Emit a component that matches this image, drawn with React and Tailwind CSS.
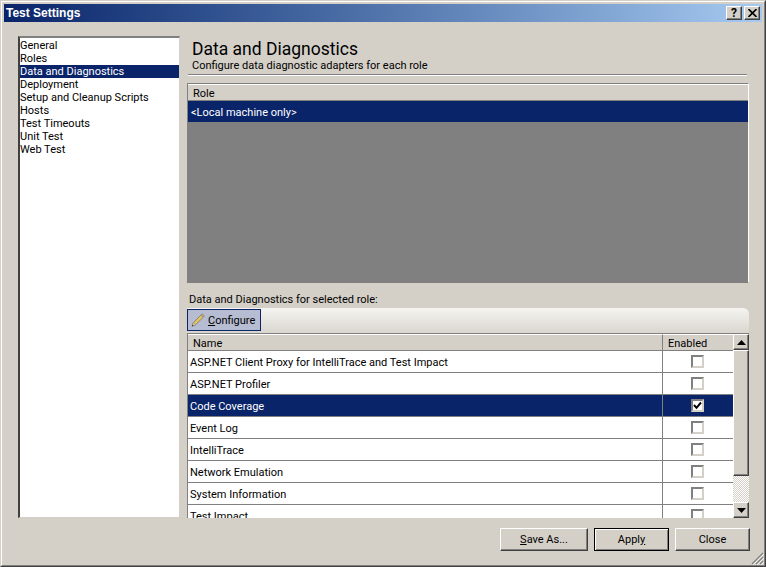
import React from 'react'

const FONT = "font-['Roboto','Liberation_Sans',sans-serif]"

const pages = [
  'General',
  'Roles',
  'Data and Diagnostics',
  'Deployment',
  'Setup and Cleanup Scripts',
  'Hosts',
  'Test Timeouts',
  'Unit Test',
  'Web Test',
]

const adapters = [
  { name: 'ASP.NET Client Proxy for IntelliTrace and Test Impact' },
  { name: 'ASP.NET Profiler' },
  { name: 'Code Coverage', selected: true, checked: true },
  { name: 'Event Log' },
  { name: 'IntelliTrace' },
  { name: 'Network Emulation' },
  { name: 'System Information' },
  { name: 'Test Impact' },
]

// raised 3D edge used for the classic buttons
const raised = 'border border-t-white border-l-white border-r-[#404040] border-b-[#404040] shadow-[inset_-1px_-1px_0_#808080] bg-[#d4d0c8]'

const Pencil = () => (
  <svg width="16" height="16" viewBox="0 0 16 16" className="shrink-0">
    <path d="M2.2 14 L3.4 10.6 L12.2 1.8 L14.4 4 L5.6 12.8 Z" fill="#e3c35c" stroke="#77705c" strokeWidth="0.7" />
    <path d="M2.2 14 L3.4 10.6 L5.6 12.8 Z" fill="#eadfc4" stroke="#77705c" strokeWidth="0.5" />
    <path d="M1.8 14.6 L2.5 12.7 L3.7 13.8 Z" fill="#333" />
    <path d="M11 3 L13.2 5.2" stroke="#9a9a9a" strokeWidth="1.3" />
  </svg>
)

const Check = ({ checked }) => (
  <div className="w-[13px] h-[13px] bg-white border-2 border-t-[#808080] border-l-[#808080] border-r-[#d4d0c8] border-b-[#d4d0c8] flex items-center justify-center">
    {checked && (
      <svg width="9" height="9" viewBox="0 0 9 9">
        <path d="M1 4 L3.5 6.8 L8 1.5" fill="none" stroke="#000" strokeWidth="2" />
      </svg>
    )}
  </div>
)

const Arrow = ({ down }) => (
  <svg width="9" height="5" viewBox="0 0 9 5">
    <path d={down ? 'M0 0 H9 L4.5 5 Z' : 'M0 5 H9 L4.5 0 Z'} fill="#000" />
  </svg>
)

const Btn = ({ first, rest, wide, active, className }) => (
  <button className={`h-[23px] text-[11px] text-black ${active ? 'border border-black shadow-[inset_1px_1px_0_#fff,inset_-1px_-1px_0_#808080] bg-[#d4d0c8]' : raised} ${className || ''}`}>
    {wide}
    <span className="underline">{first}</span>
    {rest}
  </button>
)

export default function App() {
  return (
    <div className={`w-[766px] h-[567px] relative overflow-hidden border border-t-[#d4d0c8] border-l-[#d4d0c8] border-r-[#404040] border-b-[#404040] bg-[#d4d0c8] text-[11px] leading-[13px] text-black ${FONT}`}>
      <div className="h-full flex flex-col border border-t-white border-l-white border-r-[#808080] border-b-[#808080] p-[2px]">
        {/* title bar */}
        <div className="h-[18px] shrink-0 flex items-center justify-between pl-[2px] pr-[2px] bg-gradient-to-r from-[#0a246a] to-[#a6caf0]">
          <span className="text-white font-bold text-[12px] font-['Liberation_Sans',sans-serif]">Test Settings</span>
          <div className="flex gap-[2px]">
            <div className={`w-[16px] h-[14px] flex items-center justify-center text-[12px] font-bold ${raised}`}>?</div>
            <div className={`w-[16px] h-[14px] flex items-center justify-center ${raised}`}>
              <svg width="9" height="8" viewBox="0 0 9 8">
                <path d="M0.5 0 L8.5 8 M8.5 0 L0.5 8" stroke="#000" strokeWidth="1.6" />
              </svg>
            </div>
          </div>
        </div>

        {/* body */}
        <div className="flex gap-[7px] pt-[14px] pl-[14px] h-[496px] shrink-0">
          <div className="w-[162px] h-[482px] bg-white border border-t-2 border-l-2 border-t-[#808080] border-l-[#404040] border-r-[#d4d0c8] border-b-[#d4d0c8] pt-[1px]">
            {pages.map((p) => (
              <div
                key={p}
                className={`h-[13px] whitespace-nowrap ${p === 'Data and Diagnostics' ? 'bg-[#0a246a] text-white' : ''}`}
              >
                {p}
              </div>
            ))}
          </div>

          <div className="w-[562px] flex flex-col">
            <div className="pl-[5px] h-[38px]">
              <div className="text-[17.5px] leading-[22px] mt-[2px]">Data and Diagnostics</div>
              <div className="leading-[12px]">Configure data diagnostic adapters for each role</div>
            </div>
            <div className="ml-[1px] w-[559px] border-t border-t-[#808080] border-b border-b-white mb-[7px]" />

            {/* role grid */}
            <div className="h-[200px] bg-[#808080] border border-[#808080] border-r-white shrink-0">
              <div className="h-[16px] bg-[#d4d0c8] border-t border-t-white pl-[5px] leading-[17px]">Role</div>
              <div className="mt-[1px] h-[21px] bg-[#0a246a] text-white pl-[3px] leading-[24px]">&lt;Local machine only&gt;</div>
            </div>

            <div className="h-[25px] leading-[33px] pl-[2px]">Data and Diagnostics for selected role:</div>

            {/* toolbar */}
            <div className="h-[25px] shrink-0 rounded-tr-[6px] bg-gradient-to-b from-[#f5f4f0] to-[#d9d6cf] pt-[1px]">
              <div className="w-[74px] h-[22px] flex items-center gap-[2px] pl-[2px] bg-[#b6bdd2] border border-[#0a246a]">
                <Pencil />
                <span><span className="underline">C</span>onfigure</span>
              </div>
            </div>

            {/* adapters grid */}
            <div className="flex h-[185px] overflow-hidden border-l border-l-[#808080] border-t border-t-[#808080]">
              <div className="w-[545px] flex flex-col overflow-hidden bg-white">
                <div className="h-[17px] shrink-0 flex bg-[#d4d0c8] border-b border-b-[#808080]">
                  <div className="w-[475px] pl-[5px] leading-[18px] border-t border-t-white border-r border-r-[#808080]">Name</div>
                  <div className="flex-1 pl-[5px] leading-[18px] border-t border-t-white">Enabled</div>
                </div>
                {adapters.map((a) => (
                  <div
                    key={a.name}
                    className={`h-[22px] shrink-0 flex border-b border-b-[#808080] ${a.selected ? 'bg-[#0a246a] text-white' : ''}`}
                  >
                    <div className="w-[475px] pl-[2px] leading-[24px] whitespace-nowrap border-r border-r-[#808080]">{a.name}</div>
                    <div className="flex-1 flex items-center justify-center pr-[1px]">
                      <Check checked={a.checked} />
                    </div>
                  </div>
                ))}
              </div>

              {/* scrollbar */}
              <div className="w-[16px] flex flex-col shrink-0">
                <div className={`h-[16px] shrink-0 flex items-center justify-center ${raised}`}><Arrow /></div>
                <div className={`h-[126px] shrink-0 ${raised}`} />
                <div className="flex-1 bg-[repeating-conic-gradient(#fff_0_25%,#d4d0c8_0_50%)] bg-[length:2px_2px]" />
                <div className={`h-[16px] shrink-0 flex items-center justify-center ${raised}`}><Arrow down /></div>
              </div>
            </div>
          </div>
        </div>

        {/* buttons */}
        <div className="flex justify-end gap-[6px] pt-[10px] pr-[12px]">
          <Btn first="S" rest="ave As..." className="w-[88px]" />
          <Btn wide="Appl" first="y" active className="w-[75px]" />
          <Btn wide="Close" className="w-[75px]" />
        </div>
      </div>

      {/* resize grip */}
      <svg className="absolute right-[1px] bottom-[1px]" width="14" height="14" viewBox="0 0 14 14">
        <path d="M13 2 L2 13 M13 6 L6 13 M13 10 L10 13" stroke="#808080" strokeWidth="1.2" />
        <path d="M14 3 L3 14 M14 7 L7 14 M14 11 L11 14" stroke="#fff" strokeWidth="0.8" />
      </svg>
    </div>
  )
}
